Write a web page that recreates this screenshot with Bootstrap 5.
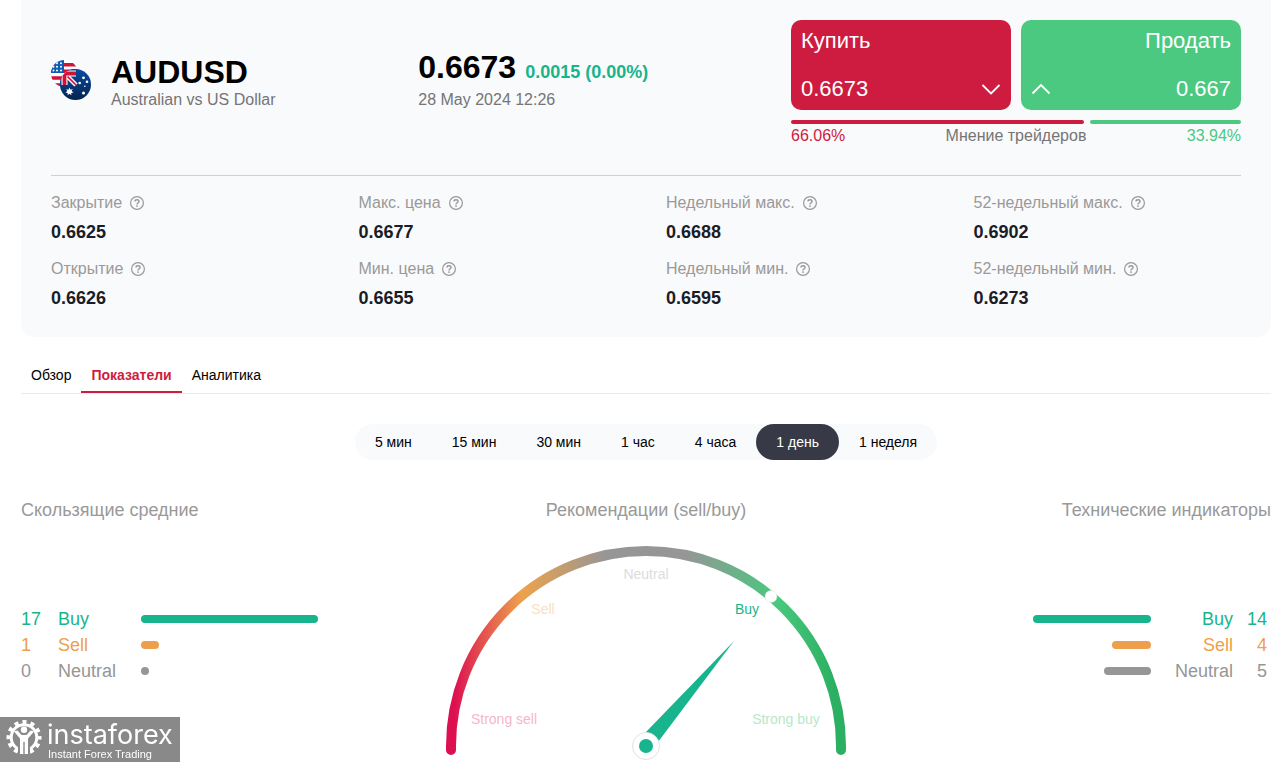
<!DOCTYPE html>
<html lang="ru">
<head>
<meta charset="utf-8">
<meta name="viewport" content="width=device-width, initial-scale=1">
<title>AUDUSD</title>
<link rel="stylesheet" href="https://cdn.jsdelivr.net/npm/bootstrap@5.3.0/dist/css/bootstrap.min.css">
<style>
  body { font-family: "Liberation Sans", Arial, sans-serif; font-size: 16px; line-height: 24px; color: #000; background: #fff; }
  .page { padding: 0 8px 0 21px; }
  .quote-card { background: #f9fafc; border-radius: 0 0 14px 14px; padding: 20px 30px 27px; }
  .quote-top { padding-bottom: 27px; border-bottom: 1px solid #c9cfdf; }
  .pair { gap: 20px; }
  .pair-name { font-size: 32px; line-height: 32px; font-weight: 700; margin: 0; }
  .muted { color: #757575; }
  .price-box { margin-bottom: 10px; }
  .price { font-size: 32px; line-height: 42px; font-weight: 700; gap: 9px; }
  .change { font-size: 18px; line-height: 24px; color: #18b48e; }
  .deal-box { width: 450px; }
  .deal-row { gap: 10px; }
  .deal { flex: 1 1 0; height: 90px; border: 0; border-radius: 10px; padding: 5px 10px; color: #fff; font-size: 22px; line-height: 32px; }
  .deal-buy { background: #ce1c40; }
  .deal-sell { background: #4bc980; }
  .opinion { height: 4px; gap: 6px; margin-top: 10px; }
  .opinion span { border-radius: 2px; }
  .c-red { color: #ce1c40; }
  .c-green { color: #4bc980; }
  .stats { --bs-gutter-x: 40px; row-gap: 13px; padding-top: 15px; }
  .stat-label { color: #999; margin-bottom: 5px; gap: 8px; }
  .stat-value { font-size: 18px; font-weight: 700; color: #1b1d26; margin: 0; }
  .tabs { margin-top: 20px; border-bottom: 1px solid #e9ebef; font-size: 14px; line-height: 20px; }
  .tabs .nav-link { color: #000; padding: 8px 10px 6px; border-bottom: 2px solid transparent; }
  .tabs .nav-link.active { color: #ce1c40; font-weight: 700; border-color: #ce1c40; }
  .periods { margin-top: 30px; background: #f9fafc; border-radius: 18px; }
  .periods button { border: 0; background: none; color: #000; font-size: 14px; line-height: 20px; padding: 8px 20px; border-radius: 18px; }
  .periods button.active { background: #373a46; color: #fff; }
  .summary { margin-top: 38px; }
  .summary h2 { font-size: 18px; line-height: 24px; font-weight: 400; color: #999; margin: 0 0 24px; }
  .summary .votes { margin-top: 84px; }
  .votes { font-size: 18px; line-height: 26px; }
  .votes td, .votes th { padding: 0; font-weight: 400; }
  .votes .num { width: 37px; }
  .votes .kind { width: 83px; }
  .votes .track { width: 180px; }
  .votes-end { margin-right: 4px; }
  .votes-end .num { width: 34px; }
  .votes-end .kind { width: 82px; }
  .meter { display: block; box-sizing: content-box; height: 8px; padding: 0 4px; border-radius: 4px; background: currentColor; }
  .v-buy { color: #18b48e; }
  .v-sell { color: #ee9f4b; }
  .v-neutral { color: #969696; }
  .gauge { display: block; width: 400px; height: 216px; margin: 0 auto; font-size: 14px; }
  .brand { left: 0; bottom: 0; width: 180px; height: 45px; }
</style>
</head>
<body>
<svg class="d-none" aria-hidden="true">
  <symbol id="help" viewBox="0 0 14 14">
    <circle cx="7" cy="7" r="6.4" fill="none" stroke="#999" stroke-width="1.2"/>
    <path d="M5 5.5Q5 3.8 7 3.8T9 5.5Q9 6.4 8 6.9T7 8.4" fill="none" stroke="#999" stroke-width="1.4"/>
    <circle cx="7" cy="10.1" r=".9" fill="#999"/>
  </symbol>
</svg>
<main class="page">
  <section class="quote-card">
    <div class="quote-top d-flex justify-content-between align-items-center">
      <div class="pair d-flex align-items-start">
        <svg class="mt-1 flex-shrink-0" width="40" height="40" viewBox="0 0 40 40" aria-hidden="true">
          <defs>
            <clipPath id="us"><circle cx="13.5" cy="13.5" r="13.5"/></clipPath>
            <clipPath id="au"><circle cx="24.5" cy="24.5" r="15.5"/></clipPath>
            <linearGradient id="navy" x2="0" y2="1"><stop stop-color="#0a4ba3"/><stop offset="1" stop-color="#03254f"/></linearGradient>
          </defs>
          <g clip-path="url(#us)">
            <path fill="#fff" d="M0 0h28v28H0z"/>
            <path stroke="#cf1237" stroke-width="3.6" d="M0 4.7h28M0 11.3h28M0 18h28M0 25h28"/>
            <path fill="#0d5cb5" d="M0 0h13v13H0z"/>
            <g fill="#fff"><circle cx="6" cy="3.3" r="1"/><circle cx="10" cy="3.3" r="1"/><circle cx="2.5" cy="6.8" r="1"/><circle cx="6" cy="6.8" r="1"/><circle cx="10" cy="6.8" r="1"/><circle cx="2.5" cy="10.5" r="1"/><circle cx="6" cy="10.5" r="1"/><circle cx="10" cy="10.5" r="1"/></g>
          </g>
          <g clip-path="url(#au)">
            <path fill="url(#navy)" d="M9 9h31v31H9z"/>
            <path fill="#0a3f8f" d="M9 9h16v16H9z"/>
            <path stroke="#fff" stroke-width="4.500" d="M13 13l12 12"/>
            <path stroke="#fff" stroke-width="6" d="M13.5 9v16M9 13.5h16"/>
            <path stroke="#cf1237" stroke-width="3.8" d="M13.5 9v16M9 13.5h16"/>
            <path stroke="#cf1237" stroke-width="1.7" d="M16.500 16.500l8.500 8.500"/>
            <path fill="#fff" d="M18.5 27.5l1 2.2 2.3-.7-1.2 2.1 2 1.3-2.4.5.2 2.4-1.9-1.6-1.9 1.6.2-2.4-2.4-.5 2-1.3-1.2-2.1 2.3.7z"/>
            <g fill="#fff"><circle cx="32.5" cy="17.8" r="1.4"/><circle cx="28.7" cy="23" r="1.3"/><circle cx="36" cy="21.7" r="1.3"/><circle cx="33.8" cy="26.2" r=".8"/><circle cx="32.5" cy="33" r="1.5"/></g>
          </g>
        </svg>
        <div>
          <h1 class="pair-name">AUDUSD</h1>
          <div class="muted">Australian vs US Dollar</div>
        </div>
      </div>
      <div class="price-box">
        <div class="price d-flex align-items-baseline"><span>0.6673</span><span class="change">0.0015 (0.00%)</span></div>
        <div class="muted">28 May 2024 12:26</div>
      </div>
      <div class="deal-box">
        <div class="deal-row d-flex">
          <button type="button" class="deal deal-buy d-flex flex-column justify-content-between align-items-start">
            <span>Купить</span>
            <span class="d-flex w-100 justify-content-between align-items-center">0.6673
              <svg width="20" height="12" viewBox="0 0 20 12" fill="none" stroke="#fff" stroke-width="1.8" aria-hidden="true"><path d="M1.5 2L10 10.500 18.500 2"/></svg>
            </span>
          </button>
          <button type="button" class="deal deal-sell d-flex flex-column justify-content-between align-items-end">
            <span>Продать</span>
            <span class="d-flex w-100 justify-content-between align-items-center">
              <svg width="20" height="12" viewBox="0 0 20 12" fill="none" stroke="#fff" stroke-width="1.8" aria-hidden="true"><path d="M1.500 10.500L10 2l8.500 8.500"/></svg>
              0.667</span>
          </button>
        </div>
        <div class="opinion d-flex">
          <span class="deal-buy" style="flex:66.06 1 0"></span>
          <span class="deal-sell" style="flex:33.94 1 0"></span>
        </div>
        <div class="d-flex justify-content-between muted">
          <span class="c-red">66.06%</span><span>Мнение трейдеров</span><span class="c-green">33.94%</span>
        </div>
      </div>
    </div>
    <dl class="row stats mb-0">
      <div class="col-3"><dt class="stat-label fw-normal d-flex align-items-center">Закрытие <svg width="14" height="14"><use href="#help"/></svg></dt><dd class="stat-value">0.6625</dd></div>
      <div class="col-3"><dt class="stat-label fw-normal d-flex align-items-center">Макс. цена <svg width="14" height="14"><use href="#help"/></svg></dt><dd class="stat-value">0.6677</dd></div>
      <div class="col-3"><dt class="stat-label fw-normal d-flex align-items-center">Недельный макс. <svg width="14" height="14"><use href="#help"/></svg></dt><dd class="stat-value">0.6688</dd></div>
      <div class="col-3"><dt class="stat-label fw-normal d-flex align-items-center">52-недельный макс. <svg width="14" height="14"><use href="#help"/></svg></dt><dd class="stat-value">0.6902</dd></div>
      <div class="col-3"><dt class="stat-label fw-normal d-flex align-items-center">Открытие <svg width="14" height="14"><use href="#help"/></svg></dt><dd class="stat-value">0.6626</dd></div>
      <div class="col-3"><dt class="stat-label fw-normal d-flex align-items-center">Мин. цена <svg width="14" height="14"><use href="#help"/></svg></dt><dd class="stat-value">0.6655</dd></div>
      <div class="col-3"><dt class="stat-label fw-normal d-flex align-items-center">Недельный мин. <svg width="14" height="14"><use href="#help"/></svg></dt><dd class="stat-value">0.6595</dd></div>
      <div class="col-3"><dt class="stat-label fw-normal d-flex align-items-center">52-недельный мин. <svg width="14" height="14"><use href="#help"/></svg></dt><dd class="stat-value">0.6273</dd></div>
    </dl>
  </section>

  <nav class="nav tabs">
    <a class="nav-link" href="#">Обзор</a>
    <a class="nav-link active" aria-current="page" href="#">Показатели</a>
    <a class="nav-link" href="#">Аналитика</a>
  </nav>

  <div class="d-flex justify-content-center">
    <div class="periods d-flex" role="group" aria-label="Период">
      <button type="button">5 мин</button>
      <button type="button">15 мин</button>
      <button type="button">30 мин</button>
      <button type="button">1 час</button>
      <button type="button">4 часа</button>
      <button type="button" class="active" aria-pressed="true">1 день</button>
      <button type="button">1 неделя</button>
    </div>
  </div>

  <div class="row g-0 summary">
    <section class="col">
      <h2>Скользящие средние</h2>
      <table class="votes">
        <tr class="v-buy"><td class="num">17</td><th class="kind" scope="row">Buy</th><td class="track"><span class="meter" style="width:94%"></span></td></tr>
        <tr class="v-sell"><td class="num">1</td><th class="kind" scope="row">Sell</th><td class="track"><span class="meter" style="width:5.6%"></span></td></tr>
        <tr class="v-neutral"><td class="num">0</td><th class="kind" scope="row">Neutral</th><td class="track"><span class="meter" style="width:0%"></span></td></tr>
      </table>
    </section>
    <section class="col text-center">
      <h2>Рекомендации (sell/buy)</h2>
      <svg class="gauge" viewBox="0 0 400 216" role="img" aria-label="Buy">
        <defs>
          <linearGradient id="scale" gradientUnits="userSpaceOnUse" x1="0" y1="0" x2="400" y2="0">
            <stop offset=".02" stop-color="#dc0f50"/><stop offset=".07" stop-color="#e1404f"/><stop offset=".19" stop-color="#eda24c"/>
            <stop offset=".4" stop-color="#969696"/><stop offset=".6" stop-color="#969696"/>
            <stop offset=".83" stop-color="#48c87e"/><stop offset=".97" stop-color="#2bb062"/>
          </linearGradient>
        </defs>
        <path d="M5 204v-4a195 195 0 0 1 390 0v4" fill="none" stroke="url(#scale)" stroke-width="10" stroke-linecap="round"/>
        <circle cx="325" cy="50.500" r="6" fill="#fff" stroke="#ddd" stroke-width=".5"/>
        <g text-anchor="middle">
          <text x="58" y="178" fill="#f7b5cb">Strong sell</text>
          <text x="97" y="68" fill="#fadfc0">Sell</text>
          <text x="200" y="33" fill="#dcdcdc">Neutral</text>
          <text x="301" y="68" fill="#18b48e">Buy</text>
          <text x="340" y="178" fill="#b6e8ca">Strong buy</text>
        </g>
        <path d="M288 95L212 196l-12-10z" fill="#18b48e"/>
        <circle cx="200" cy="200" r="13.500" fill="#fff" stroke="#e2e2e2"/>
        <circle cx="200" cy="200" r="7" fill="#18b48e"/>
      </svg>
    </section>
    <section class="col text-end">
      <h2>Технические индикаторы</h2>
      <table class="votes votes-end ms-auto">
        <tr class="v-buy"><td class="track"><span class="meter ms-auto" style="width:60.9%"></span></td><th class="kind" scope="row">Buy</th><td class="num">14</td></tr>
        <tr class="v-sell"><td class="track"><span class="meter ms-auto" style="width:17.4%"></span></td><th class="kind" scope="row">Sell</th><td class="num">4</td></tr>
        <tr class="v-neutral"><td class="track"><span class="meter ms-auto" style="width:21.7%"></span></td><th class="kind" scope="row">Neutral</th><td class="num">5</td></tr>
      </table>
    </section>
  </div>
</main>

<svg class="brand position-fixed" viewBox="0 0 180 45" role="img" aria-label="instaforex">
  <path fill="#898989" d="M0 0h180v45H0z"/>
  <circle cx="24" cy="20.500" r="15.500" fill="none" stroke="#fff" stroke-width="4" stroke-dasharray="4.060 4.055" stroke-dashoffset="2"/>
  <circle cx="24" cy="20.500" r="12.800" fill="none" stroke="#fff" stroke-width="3"/>
  <path fill="#898989" d="M18 30h12v9H18z"/>
  <circle cx="24" cy="12.800" r="3.200" fill="#fff"/>
  <path d="M14 14.500l3.500-1 4 4.500h5l4-4.500 3.500 1-6 7V37h-3.300V25h-1.400v12H20V21.500z" fill="#fff"/>
  <text x="47" y="27" fill="#fff" font-family="Inter, sans-serif" font-weight="400" font-size="27">instaforex</text>
  <text x="48" y="41" fill="#fff" font-size="11">Instant Forex Trading</text>
</svg>
<script src="https://cdn.jsdelivr.net/npm/bootstrap@5.3.0/dist/js/bootstrap.bundle.min.js"></script>
</body>
</html>
